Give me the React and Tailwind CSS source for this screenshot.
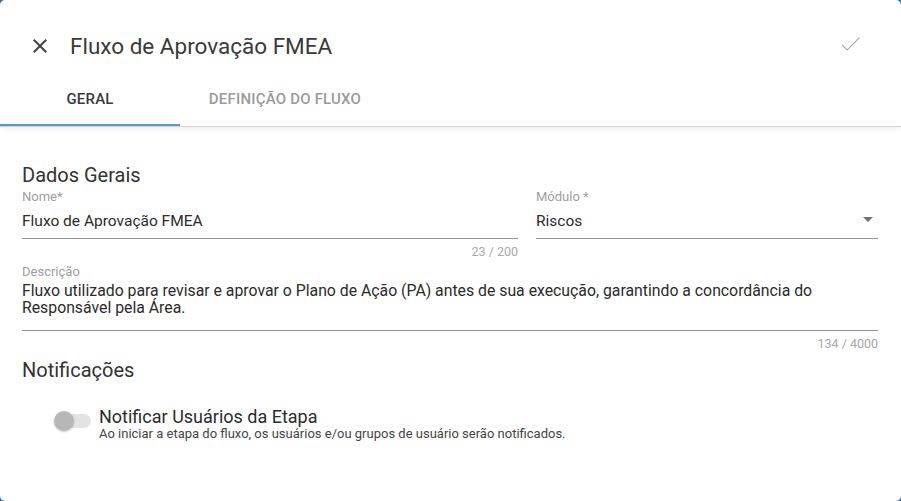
import React from 'react';

const font = { fontFamily: 'Roboto, "Liberation Sans", sans-serif' };

function CloseIcon() {
  return (
    <svg width="24" height="24" viewBox="0 0 24 24" fill="#424242">
      <path d="M19 6.41 17.59 5 12 10.59 6.41 5 5 6.41 10.59 12 5 17.59 6.41 19 12 13.41 17.59 19 19 17.59 13.41 12z" />
    </svg>
  );
}

function CheckIcon() {
  return (
    <svg width="27" height="27" viewBox="0 0 24 24" fill="#a3a3a3">
      <path d="M9 16.17 4.83 12l-.7.7L9 17.6 20.3 6.3l-.7-.7z" />
    </svg>
  );
}

function Field({ label, value, className = '', right }) {
  return (
    <div className={className}>
      <div className="mt-[2px] text-[13px] leading-[16px] text-[#9e9e9e]">{label}</div>
      <div className="flex items-center pt-[6px] pb-[7px] border-b border-[#949494]">
        <span className="flex-1 text-[15.5px] leading-[20px] text-[#2b2b2b]">{value}</span>
        {right}
      </div>
    </div>
  );
}

export default function App() {
  return (
    <div className="w-[901px] h-[501px] bg-[#2c6cae]" style={font}>
      <div className="h-full bg-white rounded-[5px] overflow-hidden">
        {/* Header */}
        <div className="pt-[33px] shadow-[0_2px_5px_rgba(0,0,0,0.07)]">
          <div className="flex items-center h-[26px] pl-[28px] pr-[37px]">
            <CloseIcon />
            <h1 className="ml-[18px] text-[22.5px] leading-[26px] text-[#3a3a3a]">Fluxo de Aprovação FMEA</h1>
            <div className="ml-auto -mt-[3px]">
              <CheckIcon />
            </div>
          </div>

          {/* Tabs */}
          <div className="mt-[29px] flex border-b border-[#d4d4d4]">
            <div className="w-[180px] h-[38px] pt-[1px] text-center text-[15px] leading-[20px] font-medium tracking-[0.2px] text-[#3a3a3a] border-b-[2px] border-[#5b97cc] -mb-[1px]">
              GERAL
            </div>
            <div className="w-[210px] h-[38px] pt-[1px] text-center text-[15px] leading-[20px] font-medium tracking-[0.2px] text-[#9a9a9a]">
              DEFINIÇÃO DO FLUXO
            </div>
          </div>
        </div>

        {/* Body */}
        <div className="pl-[22px] pr-[23px] pt-[36px]">
          <h2 className="text-[20px] leading-[24px] text-[#333]">Dados Gerais</h2>

          <div className="flex gap-[18px]">
            <div className="w-[496px]">
              <Field label="Nome*" value="Fluxo de Aprovação FMEA" />
              <div className="mt-[6px] text-right text-[12.5px] leading-[13px] text-[#a8a8a8]">23 / 200</div>
            </div>
            <Field
              className="flex-1"
              label="Módulo *"
              value="Riscos"
              right={
                <svg width="10" height="5" viewBox="0 0 10 5" className="mr-[5px] -mt-[3px]">
                  <path d="M0 0h10L5 5z" fill="#757575" />
                </svg>
              }
            />
          </div>

          <div className="mt-[6px]">
            <div className="text-[13px] leading-[16px] text-[#9e9e9e]">Descrição</div>
            <div className="mt-[2px] pb-[14px] border-b border-[#949494] text-[15.8px] leading-[17px] text-[#2b2b2b]">
              Fluxo utilizado para revisar e aprovar o Plano de Ação (PA) antes de sua execução, garantindo a concordância do Responsável pela Área.
            </div>
            <div className="mt-[6px] text-right text-[12.5px] leading-[13px] text-[#a8a8a8]">134 / 4000</div>
          </div>

          <h2 className="mt-[8px] text-[20px] leading-[24px] text-[#333]">Notificações</h2>

          <div className="mt-[24px] ml-[32px] flex items-start">
            <div className="relative w-[40px] h-[20px] mt-[5px] flex items-center">
              <div className="ml-[3px] w-[34px] h-[14px] rounded-full bg-[#e3e3e3]" />
              <div className="absolute left-0 top-0 w-[20px] h-[20px] rounded-full bg-[#b7b7b7] shadow-[0_1px_2px_rgba(0,0,0,0.2)]" />
            </div>
            <div className="ml-[5px]">
              <div className="text-[18px] leading-[21px] text-[#2b2b2b]">Notificar Usuários da Etapa</div>
              <div className="text-[13px] leading-[14px] text-[#444]">
                Ao iniciar a etapa do fluxo, os usuários e/ou grupos de usuário serão notificados.
              </div>
            </div>
          </div>
        </div>
      </div>
    </div>
  );
}
